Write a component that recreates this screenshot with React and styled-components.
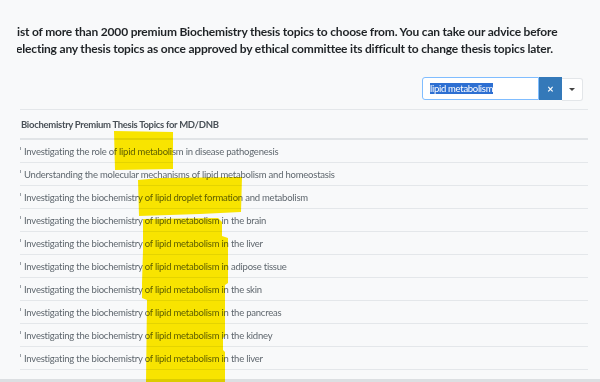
import React from 'react';
import styled, { createGlobalStyle } from 'styled-components';

const GlobalStyle = createGlobalStyle`
    html, body {
        margin: 0;
        padding: 0;
        background: #f8f9fa;
    }
    body {
        font-family: Lato, "Noto Sans", sans-serif;
    }
`;

const topics = [
    'Investigating the role of lipid metabolism in disease pathogenesis',
    'Understanding the molecular mechanisms of lipid metabolism and homeostasis',
    'Investigating the biochemistry of lipid droplet formation and metabolism',
    'Investigating the biochemistry of lipid metabolism in the brain',
    'Investigating the biochemistry of lipid metabolism in the liver',
    'Investigating the biochemistry of lipid metabolism in adipose tissue',
    'Investigating the biochemistry of lipid metabolism in the skin',
    'Investigating the biochemistry of lipid metabolism in the pancreas',
    'Investigating the biochemistry of lipid metabolism in the kidney',
    'Investigating the biochemistry of lipid metabolism in the liver',
];

const App = () => {
    return (
        <Page>
            <GlobalStyle />
            <Intro>
                <IntroText>
                    List of more than 2000 premium Biochemistry thesis topics to choose from. You can take our advice before
                    <br />
                    selecting any thesis topics as once approved by ethical committee its difficult to change thesis topics later.
                </IntroText>
            </Intro>

            <Toolbar>
                <SearchGroup>
                    <SearchInput>
                        <Selected>lipid metabolism</Selected>
                    </SearchInput>
                    <ClearButton>×</ClearButton>
                    <DropButton><Caret /></DropButton>
                </SearchGroup>
            </Toolbar>

            <Table>
                <HeadRow>Biochemistry Premium Thesis Topics for MD/DNB</HeadRow>
                {topics.map((t, i) => (
                    <Row key={i}>
                        <Tick />
                        <span>{t}</span>
                    </Row>
                ))}
            </Table>

            <BottomBar />

            {/* hand-drawn highlighter marks over the list */}
            <Marks viewBox="0 0 600 382" width="600" height="382">
                <path d="M114 131 L173 132 L173 169 L115 170 Z" />
                <path d="M138 180 L160 178 L242 177 L241 212 L200 214 L139 216 Z" />
                <path d="M143 219 L218 218 L222 222 L222 236 L228 238 L228 283 L225 285 L225 300 L225 336 L223 338 L223 350 L225 352 L225 382 L146 382 L147 300 L142 298 L142 283 L143 250 Z" />
            </Marks>
        </Page>
    );
};

const Page = styled.div`
    position: relative;
    width: 600px;
    height: 382px;
    overflow: hidden;
    box-sizing: border-box;
    padding: 23px 12px 0 20px;
`;

const Intro = styled.div`
    margin-left: -3px;
    overflow: hidden;
`;

const IntroText = styled.div`
    margin-left: -6px;
    white-space: nowrap;
    font-size: 12px;
    letter-spacing: -0.19px;
    font-weight: 700;
    line-height: 17px;
    color: #1f2326;
`;

const Toolbar = styled.div`
    display: flex;
    justify-content: flex-end;
    margin-top: 20px;
    padding-right: 5px;
`;

const SearchGroup = styled.div`
    display: flex;
    align-items: flex-start;
`;

const SearchInput = styled.div`
    box-sizing: border-box;
    width: 117px;
    height: 23px;
    padding: 4px 7px;
    background: #fff;
    border: 1px solid #80bdff;
    border-radius: 3px 0 0 3px;
    font-size: 9.5px;
    letter-spacing: -0.3px;
    line-height: 13px;
`;

const Selected = styled.span`
    background: #2d6fd2;
    color: #fff;
`;

const ClearButton = styled.div`
    box-sizing: border-box;
    width: 23px;
    height: 23px;
    display: flex;
    align-items: center;
    justify-content: center;
    background: #3479b9;
    color: #fff;
    font-size: 11px;
    font-weight: 700;
`;

const DropButton = styled.div`
    box-sizing: border-box;
    width: 21px;
    height: 23px;
    margin-top: 1px;
    display: flex;
    align-items: center;
    justify-content: center;
    background: #fff;
    border: 1px solid #e3e6e9;
    border-left: none;
    border-radius: 0 3px 3px 0;
`;

const Caret = styled.span`
    width: 0;
    height: 0;
    border-left: 3px solid transparent;
    border-right: 3px solid transparent;
    border-top: 3px solid #444;
`;

const Table = styled.div`
    margin-top: 8px;
    border-top: 1px solid #e4e7ea;
`;

const HeadRow = styled.div`
    height: 28px;
    display: flex;
    align-items: center;
    padding-left: 1px;
    border-bottom: 2px solid #e1e4e7;
    font-size: 9.5px;
    letter-spacing: -0.3px;
    font-weight: 700;
    color: #495057;
`;

const Row = styled.div`
    height: 22px;
    display: flex;
    align-items: center;
    gap: 3px;
    border-bottom: 1px solid #e4e7ea;
    font-size: 9.5px;
    letter-spacing: -0.22px;
    color: #5f676e;
`;

const Tick = styled.span`
    width: 1px;
    height: 3px;
    margin-top: -5px;
    background: #9aa0a6;
`;

const BottomBar = styled.div`
    position: absolute;
    left: 0;
    right: 0;
    bottom: 0;
    height: 3px;
    background: #dcdfe2;
`;

const Marks = styled.svg`
    position: absolute;
    left: 0;
    top: 0;
    pointer-events: none;
    mix-blend-mode: multiply;

    path {
        fill: #ffea00;
    }
`;

export default App;
